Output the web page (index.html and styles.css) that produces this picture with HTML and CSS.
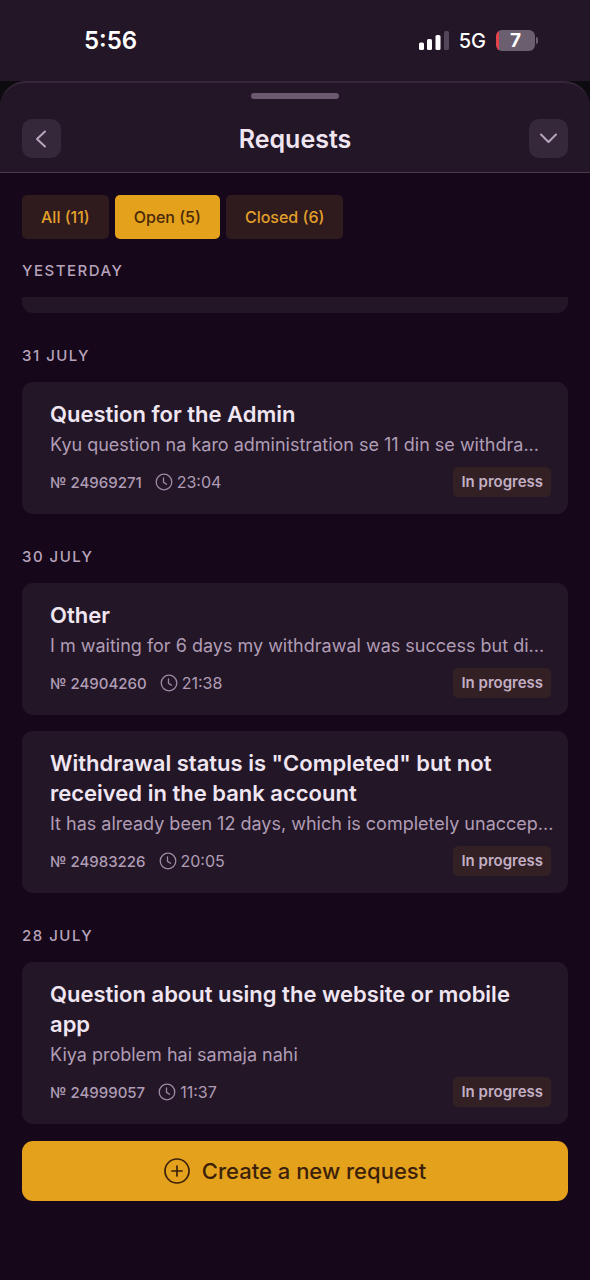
FILE: index.html
```html
<!DOCTYPE html>
<html lang="en">
<head>
<meta charset="utf-8">
<meta name="viewport" content="width=device-width, initial-scale=1">
<title>Requests</title>
<link rel="stylesheet" href="styles.css">
</head>
<body>
<svg class="sprite" aria-hidden="true">
  <symbol id="clock" viewBox="0 0 18 18">
    <circle cx="9" cy="9" r="7.8"/>
    <path d="M8.500 5v4.300l3 2"/>
  </symbol>
</svg>

<div class="status-bar">
  <span class="status-time">5:56</span>
  <div class="status-right">
    <svg class="signal" viewBox="0 0 30 20" aria-hidden="true">
      <rect x="0" y="11.500" width="5" height="7.500" rx="1.500" fill="#fff"/>
      <rect x="8" y="8" width="5" height="11" rx="1.500" fill="#fff"/>
      <rect x="16.500" y="4" width="5" height="15" rx="1.500" fill="#fff"/>
      <rect x="25" y="0" width="5" height="19" rx="1.500" fill="#51465a"/>
    </svg>
    <span class="network">5G</span>
    <div class="battery"><span class="battery-body">7</span><span class="battery-tip"></span></div>
  </div>
</div>

<div class="backdrop">
  <header class="sheet-header">
    <div class="grabber"></div>
    <div class="title-row">
      <button class="icon-button" type="button" aria-label="Back">
        <svg viewBox="0 0 39 39" aria-hidden="true"><path d="M23 12.500l-8 7.500 8 7.500"/></svg>
      </button>
      <h1 class="title">Requests</h1>
      <button class="icon-button" type="button" aria-label="Collapse">
        <svg viewBox="0 0 39 39" aria-hidden="true"><path d="M12 15.500l7.500 7.500 7.500-7.500"/></svg>
      </button>
    </div>
  </header>
</div>

<main class="content">
  <nav class="tabs" aria-label="Filter">
    <button class="tab" type="button">All (11)</button>
    <button class="tab tab-active" type="button" aria-pressed="true">Open (5)</button>
    <button class="tab" type="button">Closed (6)</button>
  </nav>

  <h2 class="day day-pinned">Yesterday</h2>
  <div class="card-tail"></div>

  <section class="group">
    <h2 class="day">31 July</h2>
    <article class="card">
      <h3 class="card-title">Question for the Admin</h3>
      <p class="card-text">Kyu question na karo administration se 11 din se withdra...</p>
      <div class="meta">
        <span class="number">№ 24969271</span>
        <span class="time"><svg class="clock" aria-hidden="true"><use href="#clock"/></svg>23:04</span>
        <span class="badge">In progress</span>
      </div>
    </article>
  </section>

  <section class="group">
    <h2 class="day">30 July</h2>
    <article class="card">
      <h3 class="card-title">Other</h3>
      <p class="card-text">I m waiting for 6 days my withdrawal was success but di...</p>
      <div class="meta">
        <span class="number">№ 24904260</span>
        <span class="time"><svg class="clock" aria-hidden="true"><use href="#clock"/></svg>21:38</span>
        <span class="badge">In progress</span>
      </div>
    </article>
    <article class="card">
      <h3 class="card-title">Withdrawal status is "Completed" but not received in the bank account</h3>
      <p class="card-text">It has already been 12 days, which is completely unaccep...</p>
      <div class="meta">
        <span class="number">№ 24983226</span>
        <span class="time"><svg class="clock" aria-hidden="true"><use href="#clock"/></svg>20:05</span>
        <span class="badge">In progress</span>
      </div>
    </article>
  </section>

  <section class="group">
    <h2 class="day">28 July</h2>
    <article class="card">
      <h3 class="card-title">Question about using the website or mobile app</h3>
      <p class="card-text">Kiya problem hai samaja nahi</p>
      <div class="meta">
        <span class="number">№ 24999057</span>
        <span class="time"><svg class="clock" aria-hidden="true"><use href="#clock"/></svg>11:37</span>
        <span class="badge">In progress</span>
      </div>
    </article>
  </section>

  <button class="create" type="button">
    <svg class="plus" viewBox="0 0 26 26" aria-hidden="true"><circle cx="13" cy="13" r="12"/><path d="M13 8v10M8 13h10"/></svg>
    Create a new request
  </button>
</main>
</body>
</html>
```
FILE: styles.css
```css
* {
  box-sizing: border-box;
}

body {
  margin: 0;
  min-height: 100vh;
  background: #16071a;
  color: #f0e6f2;
  font-family: Inter, "Liberation Sans", sans-serif;
}

h1, h2, h3, p {
  margin: 0;
}

button {
  border: 0;
  padding: 0;
  font-family: inherit;
}

.sprite {
  position: absolute;
  width: 0;
  height: 0;
}

.status-bar {
  display: flex;
  align-items: center;
  justify-content: space-between;
  height: 81px;
  padding: 0 52px 0 84px;
  background: #231627;
  color: #fff;
}

.status-time {
  font-size: 24px;
  font-weight: 600;
}

.status-right {
  display: flex;
  align-items: center;
}

.signal {
  width: 30px;
  height: 20px;
  margin-right: 10px;
}

.network {
  margin-right: 10px;
  font-size: 20px;
  font-weight: 500;
}

.battery {
  display: flex;
  align-items: center;
  gap: 1px;
}

.battery-body {
  width: 39px;
  height: 21px;
  border-radius: 6px;
  background: linear-gradient(90deg, #e5434c 3px, #6b5e6f 3px);
  font-size: 19px;
  font-weight: 700;
  line-height: 21px;
  text-align: center;
}

.battery-tip {
  width: 2px;
  height: 7px;
  border-radius: 0 2px 2px 0;
  background: #6b5e6f;
}

.backdrop {
  background: #0d0b10;
}

.sheet-header {
  padding: 10px 22px 14px;
  border-top: 2px solid #36283a;
  border-bottom: 1px solid #4a3b4e;
  border-radius: 26px 26px 0 0;
  background: #231627;
}

.grabber {
  width: 88px;
  height: 6px;
  margin: 0 auto 20px;
  border-radius: 3px;
  background: #6d5872;
}

.title-row {
  display: flex;
  align-items: center;
  justify-content: space-between;
}

.title {
  font-size: 25px;
  font-weight: 600;
  line-height: 38px;
}

.icon-button {
  width: 39px;
  height: 39px;
  border-radius: 10px;
  background: #35283a;
}

.icon-button svg {
  display: block;
  width: 39px;
  height: 39px;
  fill: none;
  stroke: #b9a6be;
  stroke-width: 2;
  stroke-linecap: round;
  stroke-linejoin: round;
}

.content {
  padding: 22px 22px 80px;
}

.tabs {
  display: flex;
  gap: 6px;
}

.tab {
  height: 44px;
  padding: 0 19px;
  border-radius: 5px;
  background: #2f1a1e;
  color: #e3a02a;
  font-size: 16px;
  font-weight: 500;
}

.tab-active {
  background: #e3a11c;
  color: #4a2a0a;
}

.day {
  color: #b6a3bb;
  font-size: 15px;
  font-weight: 500;
  line-height: 20px;
  letter-spacing: 0.1em;
  text-transform: uppercase;
}

.day-pinned {
  margin: 22px 0 16px;
}

.card-tail {
  height: 16px;
  border-radius: 0 0 11px 11px;
  background: #231627;
}

.group {
  display: flex;
  flex-direction: column;
  gap: 16px;
  margin-top: 33px;
}

.card {
  padding: 17px 8px 17px 28px;
  border-radius: 11px;
  background: #231627;
}

.card-title {
  padding-right: 9px;
  font-size: 22px;
  font-weight: 600;
  line-height: 30px;
}

.card-text {
  overflow: hidden;
  color: #b09db5;
  font-size: 18px;
  line-height: 32px;
  text-overflow: ellipsis;
  white-space: nowrap;
}

.meta {
  display: flex;
  align-items: center;
  margin-top: 6px;
  padding-right: 9px;
  color: #b09db5;
  font-size: 15px;
}

.number {
  font-weight: 500;
}

.time {
  display: flex;
  align-items: center;
  gap: 4px;
  margin-left: 13px;
  font-size: 16px;
}

.clock {
  width: 18px;
  height: 18px;
  fill: none;
  stroke: #9d8aa3;
  stroke-width: 1.3;
  stroke-linecap: round;
}

.badge {
  margin-left: auto;
  padding: 0 8px;
  border-radius: 5px;
  background: #322024;
  color: #c3afc5;
  font-size: 15px;
  font-weight: 600;
  line-height: 30px;
}

.create {
  display: flex;
  align-items: center;
  justify-content: center;
  gap: 12px;
  width: 100%;
  height: 60px;
  margin-top: 17px;
  border-radius: 11px;
  background: #e3a11c;
  color: #3c210a;
  font-size: 22px;
  font-weight: 500;
}

.plus {
  width: 26px;
  height: 26px;
  fill: none;
  stroke: #3c210a;
  stroke-width: 1.7;
  stroke-linecap: round;
}
```
